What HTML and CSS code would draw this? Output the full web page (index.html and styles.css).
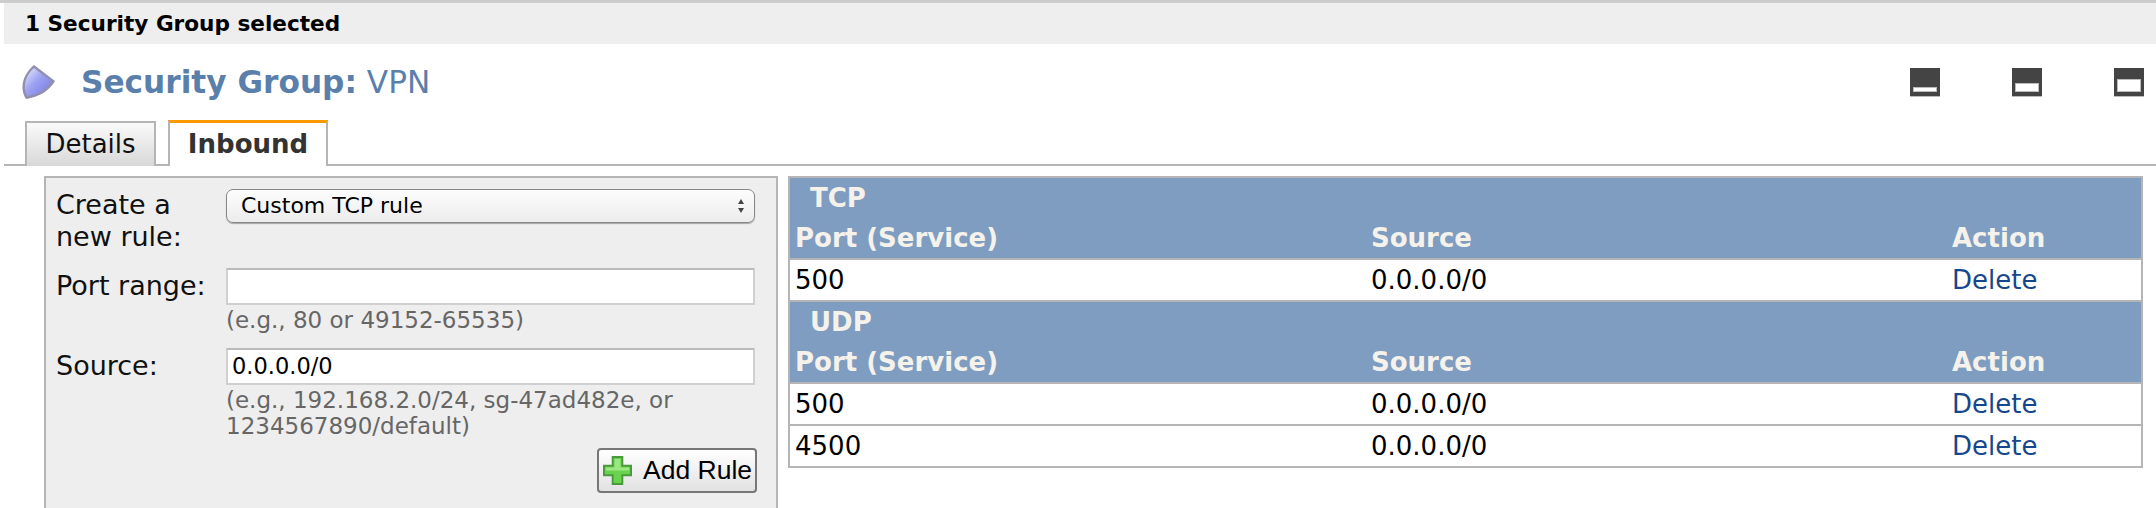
FILE: index.html
```html
<!DOCTYPE html>
<html lang="en">
<head>
  <meta charset="UTF-8" />
  <title>Security Group: VPN</title>
  <link rel="stylesheet" href="styles.css">
</head>
<body>
  <div class="selection-bar">1 Security Group selected</div>

  <div class="title-row">
    <svg class="group-icon" viewBox="0 0 36 36" aria-hidden="true">
      <defs>
        <linearGradient id="shield" x1="0" y1="0" x2="1" y2="1">
          <stop offset="0" stop-color="#eceefc"/>
          <stop offset="0.45" stop-color="#9ea2f2"/>
          <stop offset="1" stop-color="#7478e0"/>
        </linearGradient>
      </defs>
      <path d="M14 1 L35 17 C30 26 20 33 6 35 C0 26 1 12 14 1 Z" fill="#8f90b0"/>
      <path d="M14 4 L31 17 C27 25 19 30 7 32 C3 24 4 13 14 4 Z" fill="url(#shield)"/>
    </svg>
    <h1 class="title"><strong>Security Group:</strong> VPN</h1>
    <div class="pane-icons">
      <span class="pane-icon"><i class="pane-small"></i></span>
      <span class="pane-icon"><i class="pane-medium"></i></span>
      <span class="pane-icon"><i class="pane-large"></i></span>
    </div>
  </div>

  <div class="tabs">
    <div class="tab">Details</div>
    <div class="tab tab-active">Inbound</div>
  </div>

  <div class="content">
    <form class="rule-form">
      <label class="form-label">Create a<br>new rule:</label>
      <div class="select">
        <span>Custom TCP rule</span>
        <svg class="select-arrows" viewBox="0 0 8 16" aria-hidden="true">
          <path d="M4 1 L7 6 H1 Z M4 15 L7 10 H1 Z" fill="#444"/>
        </svg>
      </div>

      <label class="form-label field-label">Port range:</label>
      <div class="field">
        <div class="input"></div>
        <div class="hint">(e.g., 80 or 49152-65535)</div>
      </div>

      <label class="form-label field-label">Source:</label>
      <div class="field">
        <div class="input">0.0.0.0/0</div>
        <div class="hint">(e.g., 192.168.2.0/24, sg-47ad482e, or 1234567890/default)</div>
      </div>

      <div class="form-actions">
        <button class="add-btn" type="button">
          <svg class="plus-icon" viewBox="0 0 30 30" aria-hidden="true">
            <path d="M10 1 H20 V10 H29 V20 H20 V29 H10 V20 H1 V10 H10 Z" fill="#69d24f" stroke="#4a9a3c" stroke-width="2"/>
            <path d="M12 3 H18 V12 H27 V15 H3 V12 H12 Z" fill="#9be883"/>
          </svg>
          Add Rule
        </button>
      </div>
    </form>

    <table class="rules">
      <tr class="proto"><th colspan="3">TCP</th></tr>
      <tr class="cols"><th class="col-port">Port (Service)</th><th class="col-source">Source</th><th>Action</th></tr>
      <tr><td>500</td><td>0.0.0.0/0</td><td><a href="#">Delete</a></td></tr>
      <tr class="proto"><th colspan="3">UDP</th></tr>
      <tr class="cols"><th>Port (Service)</th><th>Source</th><th>Action</th></tr>
      <tr><td>500</td><td>0.0.0.0/0</td><td><a href="#">Delete</a></td></tr>
      <tr><td>4500</td><td>0.0.0.0/0</td><td><a href="#">Delete</a></td></tr>
    </table>
  </div>
</body>
</html>
```

FILE: styles.css
```css
* {
  box-sizing: border-box;
  margin: 0;
  padding: 0;
}
html, body {
  height: 508px;
  overflow: hidden;
}
body {
  background: #fff;
  color: #000;
  border-top: 3px solid #ccc;
  font-family: "DejaVu Sans", Verdana, sans-serif;
}

/* Top bar */
.selection-bar {
  height: 41px;
  margin-left: 4px;
  padding-left: 21px;
  background: #eee;
  font-size: 21.6px;
  font-weight: 700;
  line-height: 42px;
}

/* Title */
.title-row {
  display: flex;
  align-items: center;
  height: 76px;
  padding-left: 20px;
}
.group-icon {
  width: 36px;
  height: 36px;
  flex-shrink: 0;
}
.title {
  flex: 1;
  margin-left: 25px;
  color: #5b7fab;
  font-size: 31.2px;
  font-weight: 400;
}
.title strong {
  font-weight: 700;
}
.pane-icons {
  display: flex;
  gap: 72px;
  padding-right: 12px;
}
.pane-icon {
  display: flex;
  align-items: flex-end;
  justify-content: center;
  width: 30px;
  height: 29px;
  padding-bottom: 4px;
  background: #444;
  border-bottom: 1px solid #bbb;
}
.pane-icon i {
  display: block;
  width: 24px;
  background: #fff;
  border: 1px solid #bbb;
}
.pane-small { height: 5px; }
.pane-medium { height: 9px; }
.pane-large { height: 13px; }

/* Tabs */
.tabs {
  display: flex;
  align-items: flex-end;
  gap: 12px;
  height: 46px;
  padding-left: 21px;
  margin-left: 4px;
  border-bottom: 2px solid #b5b5b5;
}
.tab {
  width: 131px;
  height: 45px;
  margin-bottom: -2px;
  border: 2px solid #b5b5b5;
  border-bottom: 0;
  background: linear-gradient(#fafafa, #d8d8d8);
  color: #111;
  font-size: 26px;
  line-height: 42px;
  text-align: center;
}
.tab-active {
  width: 160px;
  height: 46px;
  border-top: 3px solid #f90;
  background: #fff;
  color: #333;
  font-weight: 700;
}

/* Layout under the tabs */
.content {
  display: flex;
  align-items: flex-start;
  gap: 10px;
  padding: 10px 13px 0 44px;
}

/* Form */
.rule-form {
  display: grid;
  grid-template-columns: 170px 1fr;
  align-content: start;
  flex-shrink: 0;
  width: 734px;
  height: 340px;
  padding: 11px 21px 0 10px;
  background: #eee;
  border: 2px solid #b5b5b5;
  border-bottom: 0;
  font-size: 27px;
  line-height: 32px;
}
.form-label {
  color: #111;
  margin-bottom: 15px;
  white-space: nowrap;
}
.field-label {
  padding-top: 2px;
}
.select {
  display: flex;
  align-items: center;
  justify-content: space-between;
  height: 34px;
  padding: 0 9px 0 14px;
  background: linear-gradient(#fdfdfd, #ececec);
  border: 1px solid #888;
  border-radius: 7px;
  box-shadow: 0 1px 1px rgba(0, 0, 0, 0.3);
  font-size: 22px;
}
.select-arrows {
  width: 8px;
  height: 16px;
}
.field {
  margin-bottom: 15px;
}
.input {
  height: 37px;
  padding-left: 4px;
  background: #fff;
  border: 2px solid #d0d0d0;
  border-top-color: #bbb;
  font-size: 22.5px;
  line-height: 33px;
}
.hint {
  padding-top: 2px;
  color: #666;
  font-size: 23px;
  line-height: 26px;
}
.form-actions {
  grid-column: 1 / -1;
  display: flex;
  justify-content: flex-end;
  margin-top: -6px;
  margin-right: -2px;
}
.add-btn {
  display: flex;
  align-items: center;
  gap: 11px;
  width: 160px;
  height: 45px;
  padding: 0 4px;
  background: linear-gradient(#fff, #e2e2e2);
  border: 2px solid #777;
  border-radius: 4px;
  color: #000;
  font-family: "Liberation Sans", Arial, sans-serif;
  font-size: 26.5px;
  white-space: nowrap;
}
.plus-icon {
  width: 29px;
  height: 29px;
  flex-shrink: 0;
}

/* Rules table */
.rules {
  flex: 1;
  border-collapse: collapse;
  border: 2px solid #b5b5b5;
  font-size: 26px;
}
.rules th, .rules td {
  height: 41px;
  padding: 0 5px;
  text-align: left;
  font-weight: 400;
}
.rules td {
  height: 42px;
  border-bottom: 2px solid #b5b5b5;
}
.proto th {
  padding-left: 20px;
  background: #7f9cc1;
  color: #f4f2ea;
  font-weight: 700;
}
.cols th {
  background: #7f9cc1;
  border-bottom: 2px solid #b5b5b5;
  color: #f4f2ea;
  font-weight: 700;
}
.col-port { width: 577px; }
.col-source { width: 581px; }
.rules a {
  color: #16478c;
  text-decoration: none;
}
```
